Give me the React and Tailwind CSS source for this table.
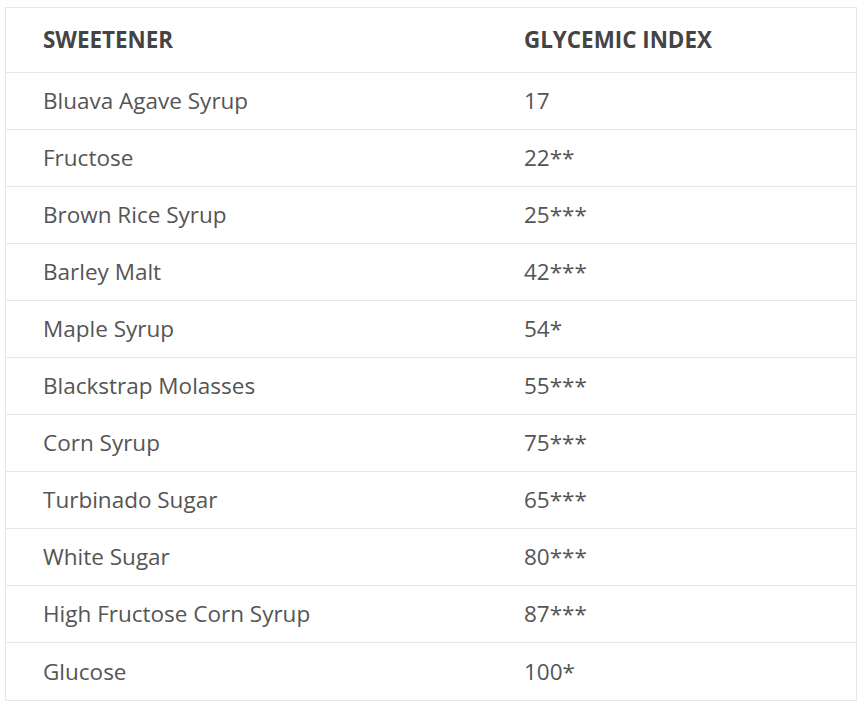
export default function App() {
  const rows = [
    ["Bluava Agave Syrup", "17"],
    ["Fructose", "22**"],
    ["Brown Rice Syrup", "25***"],
    ["Barley Malt", "42***"],
    ["Maple Syrup", "54*"],
    ["Blackstrap Molasses", "55***"],
    ["Corn Syrup", "75***"],
    ["Turbinado Sugar", "65***"],
    ["White Sugar", "80***"],
    ["High Fructose Corn Syrup", "87***"],
    ["Glucose", "100*"],
  ];
  return (
    <div className="bg-white w-[866px] h-[708px] pt-[7px] pl-[5px]" style={{ fontFamily: '"Open Sans", sans-serif' }}>
      <div className="w-[852px] border border-[#e6e6e6]">
        <div className="flex h-[65px] items-center text-[#444] font-bold text-[22.4px] border-b border-[#e6e6e6]">
          <div className="w-[518px] pl-[37px]">SWEETENER</div>
          <div>GLYCEMIC INDEX</div>
        </div>
        {rows.map(([a, b], i) => (
          <div
            key={i}
            className={`flex items-center h-[57px] text-[#555] text-[22.5px] ${i < rows.length - 1 ? "border-b border-[#e6e6e6]" : ""}`}
          >
            <div className="w-[518px] pl-[37px]">{a}</div>
            <div>{b}</div>
          </div>
        ))}
      </div>
    </div>
  );
}
